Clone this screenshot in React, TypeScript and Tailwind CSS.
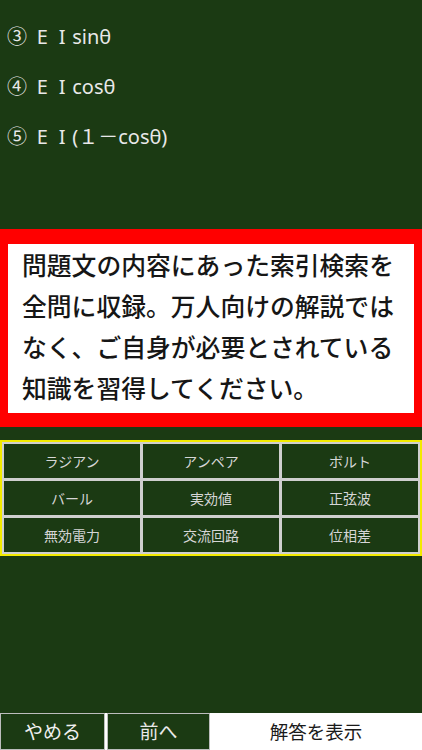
const items = [
  'ラジアン',
  'アンペア',
  'ボルト',
  'バール',
  '実効値',
  '正弦波',
  '無効電力',
  '交流回路',
  '位相差',
];

const EI = () => (
  <>
    <span className="inline-block w-[20px] text-center">E</span>
    <span className="inline-block w-[20px] text-center">I</span>
  </>
);

export default function App() {
  return (
    <div className="w-[422px] h-[750px] bg-[#1b3a13] flex flex-col font-['Noto_Sans_CJK_JP',sans-serif] overflow-hidden">
      <div className="pt-[12px] pl-[7px] text-[20px] leading-[50px] text-[#e8e8e8] font-['Noto_Sans','Noto_Sans_CJK_JP',sans-serif]">
        <div>
          ③ <EI />sinθ
        </div>
        <div>
          ④ <EI />cosθ
        </div>
        <div>
          ⑤ <EI />(１－cosθ)
        </div>
      </div>

      <div className="mt-[67px] border-x-8 border-t-[15px] border-b-[14px] border-[#ff0000] bg-white">
        <p className="h-[169px] pl-[14px] text-[24.8px] leading-[41px] font-medium text-[#161616]">
          問題文の内容にあった索引検索を
          <br />
          全問に収録。万人向けの解説では
          <br />
          なく、ご自身が必要とされている
          <br />
          知識を習得してください。
        </p>
      </div>

      <div className="mt-[13px] border-2 border-[#f2ea00] bg-[#cfcfcf] p-[2px] grid grid-cols-3 gap-[3px]">
        {items.map((t) => (
          <div
            key={t}
            className="h-[34px] bg-[#1b3a13] flex items-center justify-center text-[14px] text-[#d6d6d6]"
          >
            {t}
          </div>
        ))}
      </div>

      <div className="flex-1" />

      <div className="h-[37px] flex bg-white">
        <button className="w-[105px] bg-[#1b3a13] border border-[#bdbdbd] text-[19px] text-[#f0f0f0]">
          やめる
        </button>
        <button className="ml-[2px] w-[103px] bg-[#1b3a13] border border-[#bdbdbd] text-[19px] text-[#e8e8e8]">
          前へ
        </button>
        <button className="flex-1 text-[18.5px] text-[#1a1a1a]">解答を表示</button>
      </div>
    </div>
  );
}
